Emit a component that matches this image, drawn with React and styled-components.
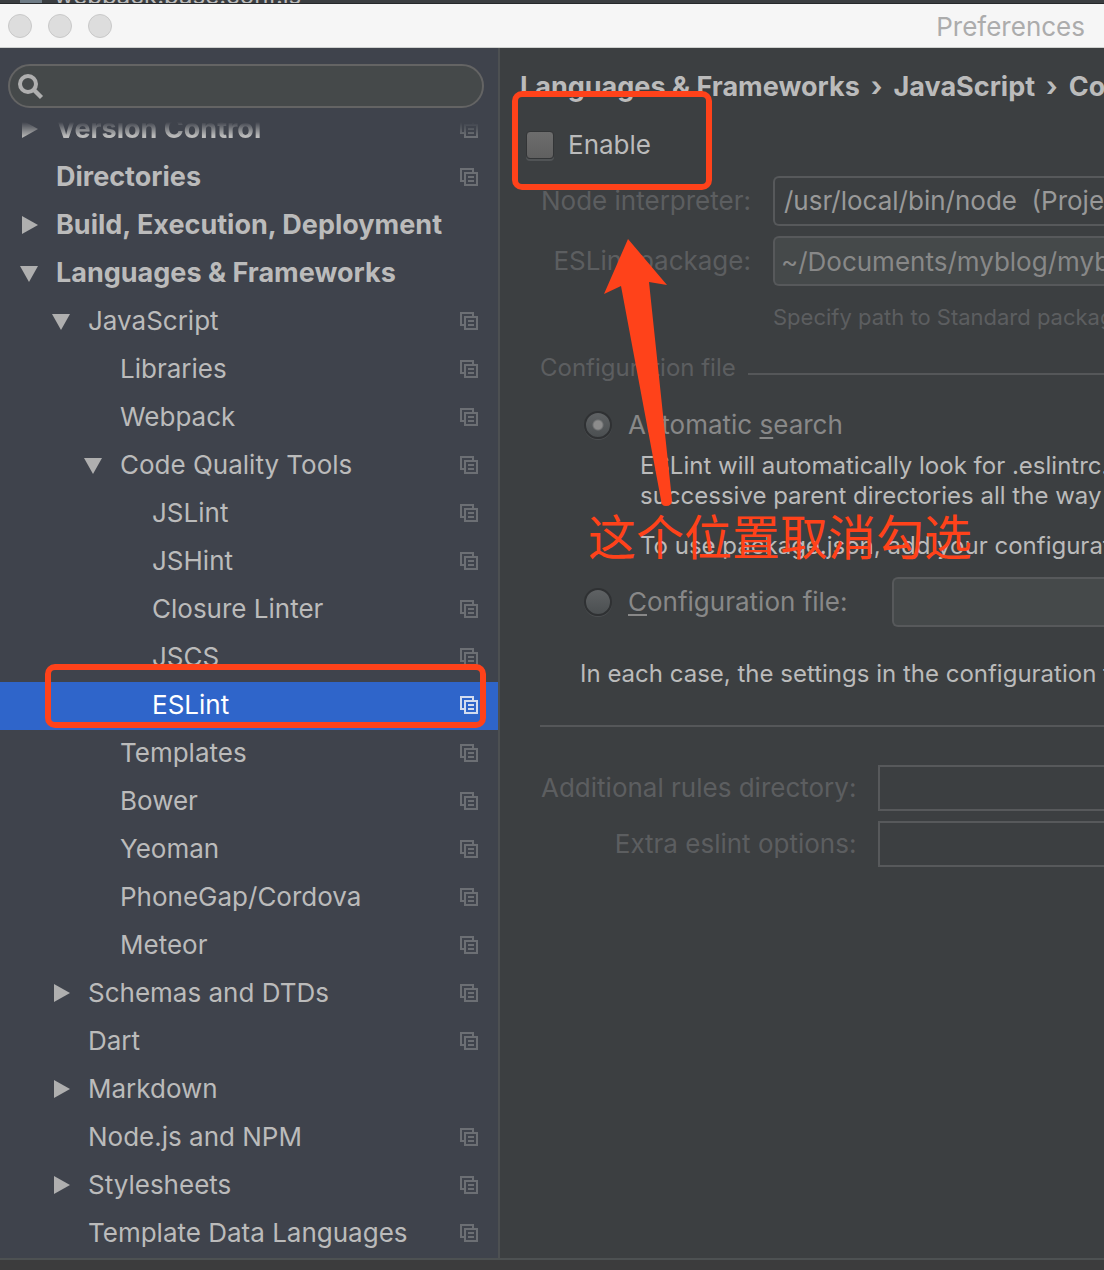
import React from "react";
import styled, { createGlobalStyle, css } from "styled-components";

const ACCENT = "#ff421a";

const GlobalStyle = createGlobalStyle`
  * { box-sizing: border-box; }
  body {
    margin: 0;
    background: #3c3f41;
    color: #bbbbbb;
    font-family: Inter, Roboto, "Liberation Sans", sans-serif;
    font-size: 26px;
    line-height: 30px;
  }
  button, input, select { font: inherit; color: inherit; margin: 0; }
  ul { list-style: none; margin: 0; padding: 0; }
  p { margin: 0; }
`;

const Screen = styled.div`
  position: relative;
  display: flex;
  flex-direction: column;
  min-height: 100vh;
  overflow: hidden;
`;

const EditorTabs = styled.div`
  display: flex;
  align-items: flex-end;
  gap: 12px;
  height: 4px;
  padding-left: 20px;
  background: #3b3e41;
  border-bottom: 1px solid #26282a;
  overflow: hidden;
`;

const FileMark = styled.span`
  width: 22px;
  height: 24px;
  background: #6f7c86;
`;

const TabName = styled.span`
  height: 22px;
  font-size: 24px;
`;

const TitleBar = styled.header`
  display: flex;
  align-items: center;
  height: 44px;
  padding: 0 19px 0 8px;
  background: #f6f6f6;
  border-bottom: 1px solid #cfd1cf;
`;

const Lights = styled.div`
  display: flex;
  gap: 16px;
`;

const Light = styled.button`
  width: 24px;
  height: 24px;
  padding: 0;
  border: 1px solid #c9c9c9;
  border-radius: 50%;
  background: #dddddd;
`;

const Title = styled.h1`
  margin: 0 0 0 auto;
  padding-top: 2px;
  font-size: 26px;
  font-weight: 400;
  color: #acacac;
`;

const Columns = styled.div`
  flex: 1;
  display: grid;
  grid-template-columns: 500px minmax(0, 1fr);
`;

const Sidebar = styled.nav`
  padding-top: 16px;
  background: #3f434c;
  border-right: 2px solid #4d5052;
`;

const SearchBox = styled.label`
  display: flex;
  align-items: center;
  height: 44px;
  margin: 0 14px 14px 8px;
  padding: 0 16px 0 8px;
  border: 2px solid #646464;
  border-radius: 22px;
  background: #45494a;
`;

const SearchInput = styled.input`
  flex: 1;
  min-width: 0;
  padding: 0 8px;
  border: 0;
  outline: 0;
  background: transparent;
`;

const TreeItem = styled.li`
  ${(p) =>
    p.$cut &&
    css`
      display: flex;
      align-items: flex-end;
      height: 32px;
      overflow: hidden;
      mask-image: linear-gradient(transparent, #000 14px);
    `}
`;

const TreeRow = styled.button`
  display: flex;
  align-items: center;
  width: 100%;
  height: 48px;
  padding: 0 19px 2px ${(p) => 20 + p.$level * 32}px;
  border: 0;
  background: ${(p) => (p.$selected ? "#2f65ca" : "transparent")};
  color: ${(p) => (p.$selected ? "#ffffff" : "#bbbbbb")};
  font-size: ${(p) => (p.$level === 0 ? 27 : 26)}px;
  font-weight: ${(p) => (p.$level === 0 ? 700 : 400)};
  text-align: left;
  white-space: nowrap;
`;

const ArrowSlot = styled.span`
  display: flex;
  flex: none;
  width: 36px;
`;

const RowName = styled.span`
  flex: 1;
`;

const Pane = styled.main`
  padding-top: 24px;
  overflow: hidden;
  white-space: nowrap;
`;

const Crumbs = styled.h2`
  display: flex;
  gap: 11px;
  margin: 0 0 0 20px;
  font-size: 27px;
  font-weight: 700;
  line-height: 30px;
`;

const EnableRow = styled.label`
  display: flex;
  align-items: center;
  gap: 14px;
  width: fit-content;
  height: 30px;
  margin: 28px 0 0 26px;
`;

const CheckBox = styled.input`
  appearance: none;
  width: 28px;
  height: 28px;
  border: 1px solid #333537;
  border-radius: 4px;
  background: linear-gradient(#6d6d6d, #606060);
  box-shadow: 0 2px 0 #515456;
`;

const Fields = styled.div`
  display: grid;
  grid-template-columns: max-content minmax(0, 1fr);
  align-items: center;
  gap: 10px 22px;
  padding-left: 41px;
  margin-top: ${(p) => p.$top}px;
`;

const FieldLabel = styled.label`
  justify-self: end;
  color: #5c5e60;
`;

const boxed = css`
  width: 100%;
  min-width: 0;
  height: 50px;
  padding: 0 0 0 6px;
  border: 2px solid #57595b;
  border-right: 0;
  border-radius: 6px 0 0 6px;
  outline: 0;
  opacity: 1;
`;

const Combo = styled.select`
  ${boxed}
  appearance: none;
  padding: 0 0 0 9px;
  background: #3c3f41;
  color: #999999;
`;

const TextBox = styled.input`
  ${boxed}
  background: #45494a;
  color: #888888;
`;

const PlainBox = styled.input`
  ${boxed}
  height: 46px;
  border-radius: 0;
  background: #3c3f41;
`;

const Hint = styled.p`
  grid-column: 2;
  margin-top: 6px;
  font-size: 22px;
  color: #5c5e60;
`;

const SectionTitle = styled.h3`
  display: flex;
  align-items: center;
  gap: 12px;
  margin: 21px 0 0 40px;
  font-size: 24px;
  font-weight: 400;
  line-height: 30px;
  color: #5c5e60;

  &::after {
    content: "";
    flex: 1;
    height: 2px;
    margin-top: 12px;
    background: #555759;
  }
`;

const RadioRow = styled.div`
  display: flex;
  align-items: center;
  height: 50px;
  margin-top: ${(p) => p.$top}px;
  padding-left: 84px;
  color: #888888;
`;

const Radio = styled.input`
  appearance: none;
  flex: none;
  width: 28px;
  height: 28px;
  border: 2px solid #2f3133;
  border-radius: 50%;
  background: linear-gradient(#5f6264, #4b4f51);
  box-shadow: 0 1px 0 #4c4f51;

  &:checked {
    background: radial-gradient(circle, #8c8c8c 4px, transparent 6px),
      linear-gradient(#5f6264, #4b4f51);
  }
`;

const RadioLabel = styled.label`
  flex: none;
  margin: 0 44px 0 16px;
`;

const Mnemonic = styled.span`
  text-decoration: underline;
  text-decoration-thickness: 2px;
  text-underline-offset: 3px;
`;

const Note = styled.p`
  margin: ${(p) => p.$top}px 0 0 ${(p) => p.$left}px;
  font-size: 24px;
  line-height: 30px;
`;

const Divider = styled.hr`
  height: 2px;
  margin: 36px 0 0 40px;
  border: 0;
  background: #555759;
`;

const Footer = styled.footer`
  height: 12px;
  border-top: 2px solid #4d5152;
  background: #3c3c3d;
`;

const Highlight = styled.div`
  position: absolute;
  left: ${(p) => p.$x}px;
  top: ${(p) => p.$y}px;
  width: ${(p) => p.$w}px;
  height: ${(p) => p.$h}px;
  border: 6px solid ${ACCENT};
  border-radius: 10px;
  pointer-events: none;
`;

const Pointer = styled.svg`
  position: absolute;
  left: 600px;
  top: 236px;
  pointer-events: none;
`;

const Remark = styled.p`
  position: absolute;
  left: 588px;
  top: 504px;
  font-family: "Noto Sans CJK SC", sans-serif;
  font-size: 48px;
  font-weight: 400;
  line-height: 60px;
  color: ${ACCENT};
  white-space: nowrap;
`;

const SearchIcon = () => (
  <svg width="28" height="28" viewBox="0 0 28 28" fill="none" stroke="#afafaf" aria-hidden="true">
    <circle cx="10" cy="12" r="8" strokeWidth="4" />
    <path d="M15.5 17.5 L23.5 25.5" strokeWidth="4.4" />
  </svg>
);

const Arrow = ({ open }) => (
  <svg width="20" height="20" viewBox="0 0 20 20" fill="#afafaf" aria-hidden="true">
    <path d={open ? "M0 3 H18 L9 19 Z" : "M2 1 L18 10 L2 19 Z"} />
  </svg>
);

const CopyIcon = ({ color }) => (
  <svg width="20" height="20" viewBox="0 0 20 20" fill="none" stroke={color} strokeWidth="2" aria-hidden="true">
    <path d="M5 14 H2 V2 H14 V5" />
    <path d="M6 6 H18 V18 H6 Z M9 10 H15 M9 14 H15" />
  </svg>
);

const ITEMS = [
  { name: "Version Control", level: 0, arrow: "closed", copy: true, cut: true },
  { name: "Directories", level: 0, copy: true },
  { name: "Build, Execution, Deployment", level: 0, arrow: "closed" },
  { name: "Languages & Frameworks", level: 0, arrow: "open" },
  { name: "JavaScript", level: 1, arrow: "open", copy: true },
  { name: "Libraries", level: 2, copy: true },
  { name: "Webpack", level: 2, copy: true },
  { name: "Code Quality Tools", level: 2, arrow: "open", copy: true },
  { name: "JSLint", level: 3, copy: true },
  { name: "JSHint", level: 3, copy: true },
  { name: "Closure Linter", level: 3, copy: true },
  { name: "JSCS", level: 3, copy: true },
  { name: "ESLint", level: 3, copy: true, selected: true },
  { name: "Templates", level: 2, copy: true },
  { name: "Bower", level: 2, copy: true },
  { name: "Yeoman", level: 2, copy: true },
  { name: "PhoneGap/Cordova", level: 2, copy: true },
  { name: "Meteor", level: 2, copy: true },
  { name: "Schemas and DTDs", level: 1, arrow: "closed", copy: true },
  { name: "Dart", level: 1, copy: true },
  { name: "Markdown", level: 1, arrow: "closed" },
  { name: "Node.js and NPM", level: 1, copy: true },
  { name: "Stylesheets", level: 1, arrow: "closed", copy: true },
  { name: "Template Data Languages", level: 1, copy: true },
];

export default function App() {
  return (
    <Screen>
      <GlobalStyle />
      <EditorTabs>
        <FileMark />
        <TabName>webpack.base.conf.js</TabName>
      </EditorTabs>
      <TitleBar>
        <Lights>
          <Light aria-label="Close" />
          <Light aria-label="Minimize" />
          <Light aria-label="Zoom" />
        </Lights>
        <Title>Preferences</Title>
      </TitleBar>
      <Columns>
        <Sidebar>
          <SearchBox>
            <SearchIcon />
            <SearchInput type="text" aria-label="Search" />
          </SearchBox>
          <ul>
            {ITEMS.map((item) => (
              <TreeItem key={item.name} $cut={item.cut}>
                <TreeRow $level={item.level} $selected={item.selected}>
                  <ArrowSlot>{item.arrow && <Arrow open={item.arrow === "open"} />}</ArrowSlot>
                  <RowName>{item.name}</RowName>
                  {item.copy && <CopyIcon color={item.selected ? "#d3dcef" : "#6c6f74"} />}
                </TreeRow>
              </TreeItem>
            ))}
          </ul>
        </Sidebar>
        <Pane>
          <Crumbs>
            <span>Languages &amp; Frameworks</span>
            <span>›</span>
            <span>JavaScript</span>
            <span>›</span>
            <span>Code Quality Tools</span>
          </Crumbs>
          <EnableRow>
            <CheckBox type="checkbox" />
            Enable
          </EnableRow>
          <Fields $top={16}>
            <FieldLabel htmlFor="node">Node interpreter:</FieldLabel>
            <Combo id="node" disabled>
              <option>{"/usr/local/bin/node\u00a0 (Project)"}</option>
            </Combo>
            <FieldLabel htmlFor="package">ESLint package:</FieldLabel>
            <TextBox id="package" disabled defaultValue="~/Documents/myblog/myblog" />
            <Hint>Specify path to Standard package</Hint>
          </Fields>
          <SectionTitle>Configuration file</SectionTitle>
          <RadioRow $top={17}>
            <Radio type="radio" name="config" id="auto" defaultChecked disabled />
            <RadioLabel htmlFor="auto">
              Automatic <Mnemonic>s</Mnemonic>earch
            </RadioLabel>
          </RadioRow>
          <Note $top={1} $left={140}>
            ESLint will automatically look for .eslintrc.
            <br />
            successive parent directories all the way
          </Note>
          <Note $top={20} $left={140}>To use package.json, add your configuration</Note>
          <RadioRow $top={16}>
            <Radio type="radio" name="config" id="file" disabled />
            <RadioLabel htmlFor="file">
              <Mnemonic>C</Mnemonic>onfiguration file:
            </RadioLabel>
            <TextBox aria-label="Configuration file path" disabled />
          </RadioRow>
          <Note $top={32} $left={80}>In each case, the settings in the configuration file</Note>
          <Divider />
          <Fields $top={38}>
            <FieldLabel htmlFor="rules">Additional rules directory:</FieldLabel>
            <PlainBox id="rules" disabled />
            <FieldLabel htmlFor="extra">Extra eslint options:</FieldLabel>
            <PlainBox id="extra" disabled />
          </Fields>
        </Pane>
      </Columns>
      <Footer />
      <Highlight $x={512} $y={91} $w={200} $h={99} />
      <Highlight $x={45} $y={664} $w={441} $h={64} />
      <Pointer width="76" height="274" viewBox="0 0 76 274" fill={ACCENT} aria-hidden="true">
        <path d="M28 3 L67 49 L49 46 L72 264 Q72 270 66 270 Q61 270 61 264 L21 50 L4 58 Z" />
      </Pointer>
      <Remark>这个位置取消勾选</Remark>
    </Screen>
  );
}
